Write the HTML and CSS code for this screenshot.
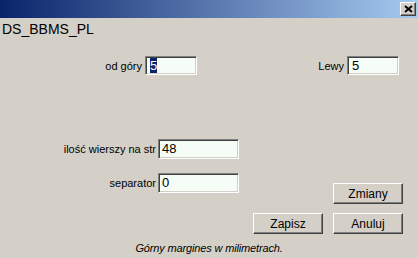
FILE: index.html
```html
<!DOCTYPE html>
<html>
<head>
<meta charset="utf-8">
<link rel="stylesheet" href="styles.css">
</head>
<body>
<div class="window">
  <div class="titlebar">
    <span class="close">
      <svg width="9" height="8" viewBox="0 0 9 8"><path d="M1 1L8 7M8 1L1 7" stroke="#000" stroke-width="2" fill="none"/></svg>
    </span>
  </div>
  <div class="heading">DS_BBMS_PL</div>
  <div class="row top">
    <div class="field f-od"><span class="label">od góry</span><span class="input small"><span class="sel">5</span></span></div>
    <div class="field f-lewy"><span class="label">Lewy</span><span class="input small">5</span></div>
  </div>
  <div class="bottom">
    <div class="fields">
      <div class="field f-wide"><span class="label lw">ilość wierszy na str</span><span class="input wide">48</span></div>
      <div class="field f-wide"><span class="label lw">separator</span><span class="input wide">0</span></div>
    </div>
    <div class="buttons">
      <div class="btnrow right"><span class="btn">Zmiany</span></div>
      <div class="btnrow"><span class="btn">Zapisz</span><span class="btn">Anuluj</span></div>
    </div>
  </div>
  <div class="footer">Górny margines w milimetrach.</div>
</div>
</body>
</html>
```
FILE: styles.css
```css
html, body { margin: 0; padding: 0; }
body { width: 418px; height: 258px; background: #d4d0c8; font-family: "Liberation Sans", Arial, sans-serif; overflow: hidden; }
.window { width: 418px; height: 258px; display: flex; flex-direction: column; }
.titlebar { height: 18px; background: linear-gradient(to right, #0a246a, #a6caf0); display: flex; justify-content: flex-end; align-items: flex-start; padding-top: 2px; padding-right: 2px; box-sizing: border-box; }
.close { width: 16px; height: 14px; box-sizing: border-box; background: #d4d0c8; border: 1px solid; border-color: #fff #404040 #404040 #fff; box-shadow: inset -1px -1px 0 #808080; display: flex; align-items: center; justify-content: center; }
.heading { font-size: 14px; color: #000; padding-left: 2px; margin-top: 3px; height: 16px; line-height: 16px; }
.row.top { display: flex; margin-top: 19px; height: 19px; }
.field { display: flex; align-items: center; }
.label { font-size: 11px; color: #000; text-align: right; padding-right: 3px; }
.f-od { width: 197px; justify-content: flex-end; }
.f-lewy { width: 202px; justify-content: flex-end; }
.input { box-sizing: border-box; height: 19px; background: #f6fcf6; border: 1px solid; border-color: #808080 #fff #fff #808080; box-shadow: inset 1px 1px 0 #404040, inset -1px -1px 0 #d4d0c8; font-size: 13px; line-height: 17px; padding-left: 4px; color: #000; }
.input.small { width: 52px; }
.input.wide { width: 81px; height: 20px; line-height: 18px; padding-left: 3px; }
.sel { background: #0a246a; color: #fff; }
.bottom { display: flex; margin-top: 64px; }
.fields { width: 239px; display: flex; flex-direction: column; gap: 14px; }
.f-wide { justify-content: flex-end; }
.lw { padding-right: 2px; }
.buttons { margin-left: 14px; width: 150px; display: flex; flex-direction: column; gap: 9px; padding-top: 44px; }
.btnrow { display: flex; gap: 10px; }
.btnrow.right { justify-content: flex-end; }
.btn { box-sizing: border-box; width: 70px; height: 21px; border: 1px solid; border-color: #fff #404040 #404040 #fff; box-shadow: inset -1px -1px 0 #808080; font-size: 12px; display: flex; align-items: center; justify-content: center; color: #000; }
.footer { font-size: 11px; font-style: italic; text-align: center; margin-top: 8px; letter-spacing: -0.15px; }
```
